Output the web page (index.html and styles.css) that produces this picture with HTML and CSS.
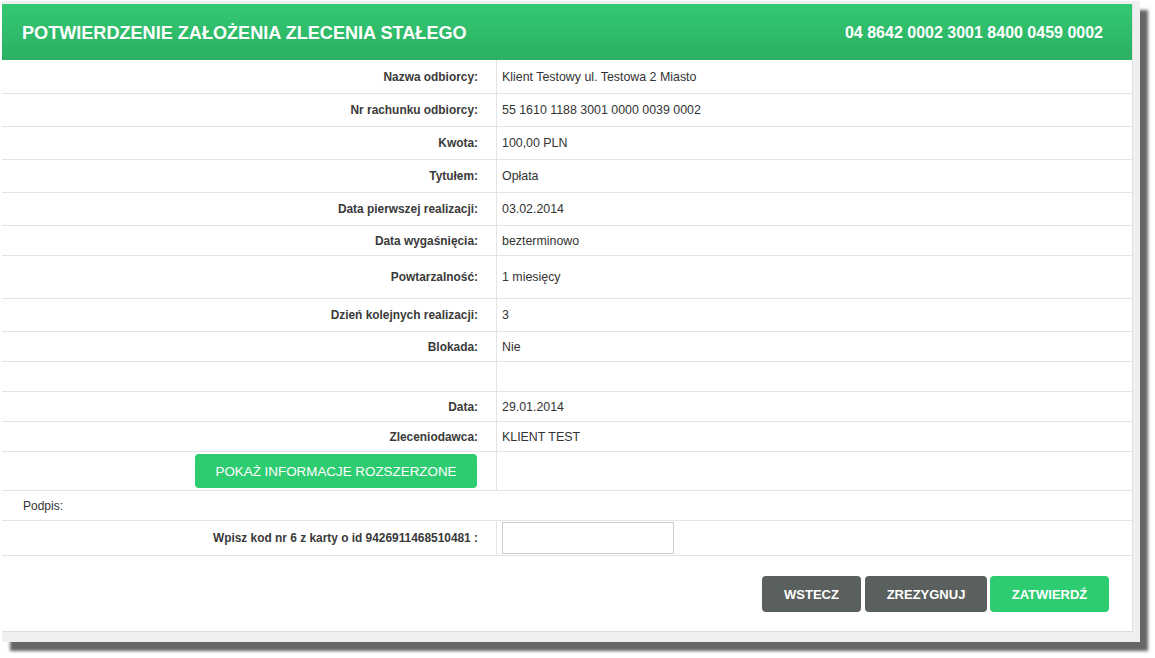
FILE: index.html
```html
<!DOCTYPE html>
<html lang="pl">
<head>
<meta charset="utf-8">
<title>Potwierdzenie założenia zlecenia stałego</title>
<link rel="stylesheet" href="styles.css">
</head>
<body>
<div class="frame">
  <div class="panel">
    <div class="header">
      <h1 class="title">POTWIERDZENIE ZAŁOŻENIA ZLECENIA STAŁEGO</h1>
      <div class="account">04 8642 0002 3001 8400 0459 0002</div>
    </div>
    <div class="rows">
      <div class="row h34"><div class="label">Nazwa odbiorcy:</div><div class="value">Klient Testowy ul. Testowa 2 Miasto</div></div>
      <div class="row h33"><div class="label">Nr rachunku odbiorcy:</div><div class="value">55 1610 1188 3001 0000 0039 0002</div></div>
      <div class="row h33"><div class="label">Kwota:</div><div class="value">100,00 PLN</div></div>
      <div class="row h33"><div class="label">Tytułem:</div><div class="value">Opłata</div></div>
      <div class="row h33"><div class="label">Data pierwszej realizacji:</div><div class="value">03.02.2014</div></div>
      <div class="row h30"><div class="label">Data wygaśnięcia:</div><div class="value">bezterminowo</div></div>
      <div class="row h43"><div class="label">Powtarzalność:</div><div class="value">1 miesięcy</div></div>
      <div class="row h33"><div class="label">Dzień kolejnych realizacji:</div><div class="value">3</div></div>
      <div class="row h30"><div class="label">Blokada:</div><div class="value">Nie</div></div>
      <div class="row h30"><div class="label"></div><div class="value"></div></div>
      <div class="row h30"><div class="label">Data:</div><div class="value">29.01.2014</div></div>
      <div class="row h30"><div class="label">Zleceniodawca:</div><div class="value">KLIENT TEST</div></div>
      <div class="row h39"><div class="label btn-cell"><button class="btn btn-green btn-wide">POKAŻ INFORMACJE ROZSZERZONE</button></div><div class="value"></div></div>
      <div class="row h30 full"><div class="plain">Podpis:</div></div>
      <div class="row h35"><div class="label">Wpisz kod nr 6 z karty o id 9426911468510481 :</div><div class="value"><input class="code" type="text"></div></div>
    </div>
    <div class="actions">
      <button class="btn btn-dark btn-back">WSTECZ</button>
      <button class="btn btn-dark btn-cancel">ZREZYGNUJ</button>
      <button class="btn btn-green btn-ok">ZATWIERDŹ</button>
    </div>
  </div>
</div>
</body>
</html>
```
FILE: styles.css
```css
* { box-sizing: border-box; }
html, body { margin: 0; padding: 0; background: #fff; }
body {
  font-family: "Liberation Sans", Arial, sans-serif;
  color: #333;
  min-height: 658px;
  overflow: hidden;
}

.frame {
  margin: 1px 0 0 2px;
  width: 1138px;
  height: 641px;
  padding: 3px 7px 10px 0;
  background: #efefef;
  box-shadow: 8px 9px 3px rgba(0, 0, 0, 0.6);
}
.panel {
  width: 1131px;
  height: 628px;
  background: #fff;
  border-right: 1px solid #e2e2e2;
  border-bottom: 1px solid #dcdcdc;
  display: flex;
  flex-direction: column;
}
.header {
  height: 56px;
  background: linear-gradient(#34c872, #2bb063);
  display: flex;
  align-items: center;
  justify-content: space-between;
  padding: 2px 29px 0 20px;
  color: #fff;
}
.title {
  margin: 0;
  font-size: 18.1px;
  font-weight: bold;
}
.account {
  font-size: 16px;
  font-weight: bold;
}
.rows { display: flex; flex-direction: column; }
.row {
  display: flex;
  border-bottom: 1px solid #e4e4e4;
  font-size: 12px;
}
.h30 { height: 30px; }
.h33 { height: 33px; }
.h34 { height: 34px; }
.h35 { height: 35px; }
.h39 { height: 39px; }
.h43 { height: 43px; }
.label {
  width: 495px;
  flex: none;
  border-right: 1px solid #e4e4e4;
  text-align: right;
  padding-right: 18px;
  font-size: 11.9px;
  font-weight: bold;
  color: #3a3a3a;
  display: flex;
  align-items: center;
  justify-content: flex-end;
}
.value {
  flex: 1;
  padding-left: 5px;
  font-size: 12.4px;
  display: flex;
  align-items: center;
  color: #333;
}
.plain {
  padding-left: 21px;
  display: flex;
  align-items: center;
  color: #333;
}
.btn-cell { padding-right: 19px; align-items: flex-start; padding-top: 2px; }
.btn {
  font-family: "Liberation Sans", Arial, sans-serif;
  border: none;
  color: #fff;
  border-radius: 4px;
  cursor: pointer;
  font-size: 13px;
}
.btn-green { background: #2ecc71; }
.btn-dark { background: #5a605d; font-weight: bold; }
.btn-wide { width: 282px; height: 34px; font-size: 13.4px; }
.code {
  width: 172px;
  height: 32px;
  border: 1px solid #cccccc;
  margin: 0;
  padding: 0 4px;
}
.actions {
  display: flex;
  justify-content: flex-end;
  gap: 3px;
  padding: 20px 23px 0 0;
}
.btn-back, .btn-cancel, .btn-ok { height: 36px; }
.btn-back { width: 99px; }
.btn-cancel { width: 122px; margin-left: 1px; }
.btn-ok { width: 119px; font-weight: bold; }
```
